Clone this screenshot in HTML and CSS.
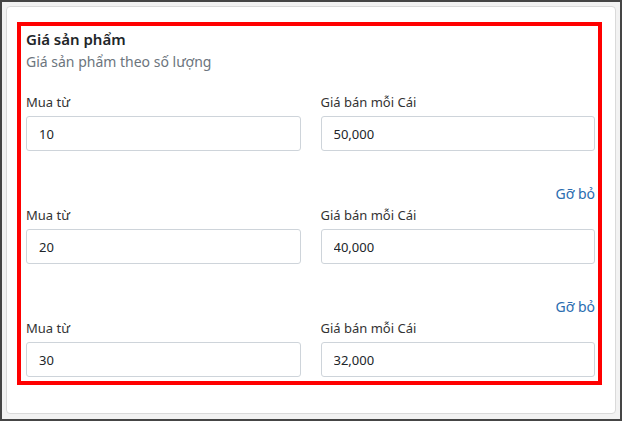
FILE: index.html
```html
<!DOCTYPE html>
<html lang="vi">
<head>
  <meta charset="UTF-8" />
  <title>Giá sản phẩm</title>
  <meta name="viewport" content="width=device-width, initial-scale=1.0" />
<link rel="stylesheet" href="styles.css">
</head>
<body>
  <div class="frame">
    <div class="card">
      <div class="price-box">
        <h2 class="title">Giá sản phẩm</h2>
        <p class="subtitle">Giá sản phẩm theo số lượng</p>

        <div class="tier">
          <div class="field">
            <label>Mua từ</label>
            <input type="text" value="10" />
          </div>
          <div class="field">
            <label>Giá bán mỗi Cái</label>
            <input type="text" value="50,000" />
          </div>
        </div>

        <div class="tier">
          <a class="remove" href="#">Gỡ bỏ</a>
          <div class="field">
            <label>Mua từ</label>
            <input type="text" value="20" />
          </div>
          <div class="field">
            <label>Giá bán mỗi Cái</label>
            <input type="text" value="40,000" />
          </div>
        </div>

        <div class="tier">
          <a class="remove" href="#">Gỡ bỏ</a>
          <div class="field">
            <label>Mua từ</label>
            <input type="text" value="30" />
          </div>
          <div class="field">
            <label>Giá bán mỗi Cái</label>
            <input type="text" value="32,000" />
          </div>
        </div>
      </div>
    </div>
  </div>
</body>
</html>
```

FILE: styles.css
```css
* {
  box-sizing: border-box;
}

body {
  margin: 0;
  font-family: "Noto Sans", "Open Sans", sans-serif;
  color: #212529;
}

.frame {
  height: 100vh;
  display: flex;
  flex-direction: column;
  border: 2px solid #454545;
  padding: 4px 4px 5px 4px;
  background: #f2f2f2;
}

.card {
  flex: 1;
  background: #fff;
  border: 1px solid #dadada;
  border-radius: 4px;
  padding: 15px 13px 0 10px;
}

/* khung đỏ đánh dấu */
.price-box {
  border: 4px solid #ff0000;
  padding: 3px 3px 4px 5px;
}

.title {
  margin: 0;
  font-size: 15px;
  font-weight: 600;
  line-height: 20px;
  color: #212529;
}

.subtitle {
  margin: 3px 0 20px;
  font-size: 14px;
  line-height: 20px;
  color: #6c757d;
}

.tier {
  display: grid;
  grid-template-columns: 1fr 1fr;
  column-gap: 20px;
}

.tier + .tier {
  margin-top: 32px;
}

.remove {
  grid-column: 1 / 3;
  justify-self: end;
  font-size: 14px;
  line-height: 22px;
  color: #2a6db0;
  text-decoration: none;
}

.field label {
  display: block;
  font-size: 13px;
  line-height: 20px;
  margin-bottom: 4px;
  color: #333;
}

.field input {
  display: block;
  width: 100%;
  height: 35px;
  padding: 0 12px;
  border: 1px solid #ced4da;
  border-radius: 3px;
  font-family: inherit;
  font-size: 13px;
  color: #212529;
  background: #fff;
}
```
